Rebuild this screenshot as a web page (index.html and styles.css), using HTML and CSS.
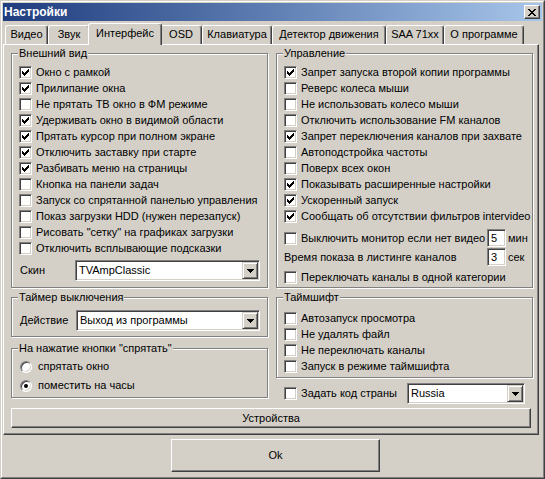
FILE: index.html
```html
<!DOCTYPE html>
<html>
<head>
<meta charset="utf-8">
<link rel="stylesheet" href="styles.css">
</head>
<body>
<div class="window">
  <div class="frame">
    <div class="titlebar">
      <span class="title">Настройки</span>
      <span class="close"><svg width="8" height="7" viewBox="0 0 8 7" shape-rendering="crispEdges"><path d="M0 0h2v1H0zM6 0h2v1H6zM1 1h2v1H1zM5 1h2v1H5zM2 2h4v1H2zM3 3h2v1H3zM2 4h4v1H2zM1 5h2v1H1zM5 5h2v1H5zM0 6h2v1H0zM6 6h2v1H6z" fill="#000"/></svg></span>
    </div>
    <div class="tabs">
      <div class="tab t-video">Видео</div>
      <div class="tab t-sound">Звук</div>
      <div class="tab active t-iface">Интерфейс</div>
      <div class="tab t-osd">OSD</div>
      <div class="tab t-kbd">Клавиатура</div>
      <div class="tab t-motion">Детектор движения</div>
      <div class="tab t-saa">SAA 71xx</div>
      <div class="tab t-about">О программе</div>
    </div>
    <div class="panel">
      <div class="cols">
        <div class="col">
          <div class="group g-view">
            <div class="legend">Внешний вид</div>
            <div class="rows">
              <div class="row"><span class="cb"><svg width="11" height="11" viewBox="0 0 11 11" shape-rendering="crispEdges"><path d="M2 4h1v3H2zM3 5h1v3H3zM4 6h1v3H4zM5 5h1v3H5zM6 4h1v3H6zM7 3h1v3H7zM8 2h1v3H8z" fill="#000"/></svg></span>Окно с рамкой</div>
              <div class="row"><span class="cb"><svg width="11" height="11" viewBox="0 0 11 11" shape-rendering="crispEdges"><path d="M2 4h1v3H2zM3 5h1v3H3zM4 6h1v3H4zM5 5h1v3H5zM6 4h1v3H6zM7 3h1v3H7zM8 2h1v3H8z" fill="#000"/></svg></span>Прилипание окна</div>
              <div class="row"><span class="cb"></span>Не прятать ТВ окно в ФМ режиме</div>
              <div class="row"><span class="cb"><svg width="11" height="11" viewBox="0 0 11 11" shape-rendering="crispEdges"><path d="M2 4h1v3H2zM3 5h1v3H3zM4 6h1v3H4zM5 5h1v3H5zM6 4h1v3H6zM7 3h1v3H7zM8 2h1v3H8z" fill="#000"/></svg></span>Удерживать окно в видимой области</div>
              <div class="row"><span class="cb"><svg width="11" height="11" viewBox="0 0 11 11" shape-rendering="crispEdges"><path d="M2 4h1v3H2zM3 5h1v3H3zM4 6h1v3H4zM5 5h1v3H5zM6 4h1v3H6zM7 3h1v3H7zM8 2h1v3H8z" fill="#000"/></svg></span>Прятать курсор при полном экране</div>
              <div class="row"><span class="cb"><svg width="11" height="11" viewBox="0 0 11 11" shape-rendering="crispEdges"><path d="M2 4h1v3H2zM3 5h1v3H3zM4 6h1v3H4zM5 5h1v3H5zM6 4h1v3H6zM7 3h1v3H7zM8 2h1v3H8z" fill="#000"/></svg></span>Отключить заставку при старте</div>
              <div class="row"><span class="cb"><svg width="11" height="11" viewBox="0 0 11 11" shape-rendering="crispEdges"><path d="M2 4h1v3H2zM3 5h1v3H3zM4 6h1v3H4zM5 5h1v3H5zM6 4h1v3H6zM7 3h1v3H7zM8 2h1v3H8z" fill="#000"/></svg></span>Разбивать меню на страницы</div>
              <div class="row"><span class="cb"></span>Кнопка на панели задач</div>
              <div class="row"><span class="cb"></span>Запуск со спрятанной панелью управления</div>
              <div class="row"><span class="cb"></span>Показ загрузки HDD (нужен перезапуск)</div>
              <div class="row"><span class="cb"></span>Рисовать "сетку" на графиках загрузки</div>
              <div class="row"><span class="cb"></span>Отключить всплывающие подсказки</div>
            </div>
            <div class="field-row skin-row">
              <span class="flabel skin-label">Скин</span>
              <div class="combo skin-combo"><span class="ctext">TVAmpClassic</span><span class="cbtn"><svg width="7" height="4" viewBox="0 0 7 4" shape-rendering="crispEdges"><path d="M0 0h7v1H0zM1 1h5v1H1zM2 2h3v1H2zM3 3h1v1H3z" fill="#000"/></svg></span></div>
            </div>
          </div>
          <div class="group g-timer">
            <div class="legend">Таймер выключения</div>
            <div class="field-row timer-row">
              <span class="flabel act-label">Действие</span>
              <div class="combo act-combo"><span class="ctext">Выход из программы</span><span class="cbtn"><svg width="7" height="4" viewBox="0 0 7 4" shape-rendering="crispEdges"><path d="M0 0h7v1H0zM1 1h5v1H1zM2 2h3v1H2zM3 3h1v1H3z" fill="#000"/></svg></span></div>
            </div>
          </div>
          <div class="group g-hide">
            <div class="legend">На нажатие кнопки "спрятать"</div>
            <div class="radios">
              <div class="rrow"><span class="radio"></span>спрятать окно</div>
              <div class="rrow"><span class="radio"><span class="dot"></span></span>поместить на часы</div>
            </div>
          </div>
        </div>
        <div class="col">
          <div class="group g-control">
            <div class="legend">Управление</div>
            <div class="rows">
              <div class="row"><span class="cb"><svg width="11" height="11" viewBox="0 0 11 11" shape-rendering="crispEdges"><path d="M2 4h1v3H2zM3 5h1v3H3zM4 6h1v3H4zM5 5h1v3H5zM6 4h1v3H6zM7 3h1v3H7zM8 2h1v3H8z" fill="#000"/></svg></span>Запрет запуска второй копии программы</div>
              <div class="row"><span class="cb"></span>Реверс колеса мыши</div>
              <div class="row"><span class="cb"></span>Не использовать колесо мыши</div>
              <div class="row"><span class="cb"></span>Отключить использование FM каналов</div>
              <div class="row"><span class="cb"><svg width="11" height="11" viewBox="0 0 11 11" shape-rendering="crispEdges"><path d="M2 4h1v3H2zM3 5h1v3H3zM4 6h1v3H4zM5 5h1v3H5zM6 4h1v3H6zM7 3h1v3H7zM8 2h1v3H8z" fill="#000"/></svg></span>Запрет переключения каналов при захвате</div>
              <div class="row"><span class="cb"></span>Автоподстройка частоты</div>
              <div class="row"><span class="cb"></span>Поверх всех окон</div>
              <div class="row"><span class="cb"><svg width="11" height="11" viewBox="0 0 11 11" shape-rendering="crispEdges"><path d="M2 4h1v3H2zM3 5h1v3H3zM4 6h1v3H4zM5 5h1v3H5zM6 4h1v3H6zM7 3h1v3H7zM8 2h1v3H8z" fill="#000"/></svg></span>Показывать расширенные настройки</div>
              <div class="row"><span class="cb"><svg width="11" height="11" viewBox="0 0 11 11" shape-rendering="crispEdges"><path d="M2 4h1v3H2zM3 5h1v3H3zM4 6h1v3H4zM5 5h1v3H5zM6 4h1v3H6zM7 3h1v3H7zM8 2h1v3H8z" fill="#000"/></svg></span>Ускоренный запуск</div>
              <div class="row"><span class="cb"><svg width="11" height="11" viewBox="0 0 11 11" shape-rendering="crispEdges"><path d="M2 4h1v3H2zM3 5h1v3H3zM4 6h1v3H4zM5 5h1v3H5zM6 4h1v3H6zM7 3h1v3H7zM8 2h1v3H8z" fill="#000"/></svg></span>Сообщать об отсутствии фильтров intervideo</div>
            </div>
            <div class="erow erow-first">
              <div class="ecell"><span class="cb"></span>Выключить монитор если нет видео</div>
              <div class="edit">5</div>
              <span class="unit">мин</span>
            </div>
            <div class="erow erow-second">
              <div class="ecell">Время показа в листинге каналов</div>
              <div class="edit">3</div>
              <span class="unit">сек</span>
            </div>
            <div class="row last-row"><span class="cb"></span>Переключать каналы в одной категории</div>
          </div>
          <div class="group g-shift">
            <div class="legend">Таймшифт</div>
            <div class="rows shift-rows">
              <div class="row"><span class="cb"></span>Автозапуск просмотра</div>
              <div class="row"><span class="cb"></span>Не удалять файл</div>
              <div class="row"><span class="cb"></span>Не переключать каналы</div>
              <div class="row"><span class="cb"></span>Запуск в режиме таймшифта</div>
            </div>
          </div>
          <div class="country-row">
            <div class="ccell"><span class="cb"></span>Задать код страны</div>
            <div class="combo country-combo"><span class="ctext">Russia</span><span class="cbtn"><svg width="7" height="4" viewBox="0 0 7 4" shape-rendering="crispEdges"><path d="M0 0h7v1H0zM1 1h5v1H1zM2 2h3v1H2zM3 3h1v1H3z" fill="#000"/></svg></span></div>
          </div>
        </div>
      </div>
      <div class="btn devices">Устройства</div>
    </div>
    <div class="btn ok">Ok</div>
  </div>
</div>
</body>
</html>
```

FILE: styles.css
```css
* { box-sizing: border-box; }
html, body { margin: 0; padding: 0; }
body {
  background: #d4d0c8;
  font-family: "Liberation Sans", Arial, sans-serif;
  font-size: 11px;
  line-height: 13px;
  color: #000;
}
.window {
  width: 545px;
  height: 479px;
  border: 1px solid;
  border-color: #d4d0c8 #404040 #404040 #d4d0c8;
  background: #d4d0c8;
}
.frame {
  height: 100%;
  border: 1px solid;
  border-color: #fff #808080 #808080 #fff;
  padding: 1px;
  display: flex;
  flex-direction: column;
  align-items: flex-start;
}
.titlebar {
  width: 100%;
  height: 18px;
  flex: 0 0 18px;
  display: flex;
  align-items: center;
  padding: 0 2px 0 1px;
  background: linear-gradient(to right, #1f3c7e 0%, #5878ae 45%, #a8c6ea 100%);
}
.title {
  color: #fff;
  font-weight: bold;
  font-size: 12px;
  line-height: 14px;
}
.close {
  margin-left: auto;
  width: 16px;
  height: 14px;
  background: #d4d0c8;
  border: 1px solid;
  border-color: #fff #404040 #404040 #fff;
  box-shadow: inset -1px -1px 0 #808080;
  display: flex;
  align-items: center;
  justify-content: center;
  padding-right: 1px;
}
.close svg { display: block; }

.tabs {
  height: 23px;
  flex: 0 0 23px;
  display: flex;
  align-items: flex-end;
  padding-left: 2px;
}
.tab {
  height: 19px;
  border-top: 1px solid #fff;
  border-left: 1px solid #fff;
  border-right: 1px solid #404040;
  box-shadow: inset -1px 0 0 #808080;
  border-radius: 3px 3px 0 0;
  background: #d4d0c8;
  display: flex;
  align-items: center;
  justify-content: center;
  white-space: nowrap;
  padding-bottom: 1px;
}
.tab.active {
  height: 22px;
  margin: 0 -2px -1px;
  position: relative;
  z-index: 2;
  padding-bottom: 3px;
}
.t-video { width: 43px; }
.t-sound { width: 42px; }
.t-iface { width: 74px; }
.t-osd { width: 42px; }
.t-kbd { width: 70px; }
.t-motion { width: 114px; }
.t-saa { width: 58px; }
.t-about { width: 80px; }

.panel {
  width: 536px;
  border: 1px solid;
  border-color: #fff #404040 #404040 #fff;
  box-shadow: inset -1px -1px 0 #808080;
  padding: 8px 5px 6px 7px;
}
.cols {
  display: grid;
  grid-template-columns: 257px 257px;
  column-gap: 8px;
  align-items: start;
}
.col {
  display: flex;
  flex-direction: column;
  align-items: stretch;
}
.group {
  border: 1px solid #808080;
  box-shadow: inset 1px 1px 0 #fff, 1px 1px 0 #fff;
  display: flex;
  flex-direction: column;
  align-items: stretch;
  padding-left: 7px;
}
.legend {
  align-self: flex-start;
  height: 13px;
  line-height: 13px;
  margin: -7px 0 0 -1px;
  padding: 0 1px;
  background: #d4d0c8;
  white-space: nowrap;
}
.g-view { height: 235px; }
.g-timer { height: 40px; margin-top: 9px; }
.g-hide { height: 50px; margin-top: 11px; }
.g-control { height: 235px; }
.g-shift { height: 81px; margin-top: 9px; }

.rows { margin-top: 4px; display: flex; flex-direction: column; }
.shift-rows { margin-top: 6px; }
.row {
  height: 16px;
  display: flex;
  align-items: center;
  white-space: nowrap;
}
.cb {
  flex: 0 0 13px;
  width: 13px;
  height: 13px;
  margin-right: 4px;
  background: #fff;
  border: 1px solid;
  border-color: #808080 #fff #fff #808080;
  box-shadow: inset 1px 1px 0 #404040, inset -1px -1px 0 #d4d0c8;
}
.cb svg { display: block; }

.field-row {
  display: flex;
  align-items: center;
}
.skin-row { margin-top: 4px; }
.timer-row { margin-top: 6px; }
.flabel { padding-left: 1px; white-space: nowrap; }
.skin-label { width: 56px; }
.act-label { width: 57px; }
.combo {
  height: 21px;
  background: #fff;
  border: 1px solid;
  border-color: #808080 #fff #fff #808080;
  box-shadow: inset 1px 1px 0 #404040, inset -1px -1px 0 #d4d0c8;
  padding: 1px;
  display: flex;
  align-items: stretch;
}
.ctext {
  flex: 1;
  display: flex;
  align-items: center;
  padding-left: 2px;
  white-space: nowrap;
}
.cbtn {
  width: 16px;
  flex: 0 0 16px;
  background: #d4d0c8;
  border: 1px solid;
  border-color: #d4d0c8 #404040 #404040 #d4d0c8;
  box-shadow: inset 1px 1px 0 #fff, inset -1px -1px 0 #808080;
  display: flex;
  align-items: center;
  justify-content: center;
}
.cbtn svg { display: block; }
.skin-combo { width: 185px; }
.act-combo { width: 184px; }

.radios { margin-top: 2px; padding-left: 1px; }
.rrow {
  height: 19px;
  display: flex;
  align-items: center;
  white-space: nowrap;
}
.radio {
  flex: 0 0 12px;
  width: 12px;
  height: 12px;
  margin-right: 6px;
  border-radius: 50%;
  background: #fff;
  border: 1px solid;
  border-color: #808080 #fff #fff #808080;
  box-shadow: inset 1px 1px 0 #404040, inset -1px -1px 0 #d4d0c8;
  display: flex;
  align-items: center;
  justify-content: center;
}
.dot {
  width: 4px;
  height: 4px;
  border-radius: 50%;
  background: #000;
}

.erow {
  height: 18px;
  display: grid;
  grid-template-columns: 203px 19px auto;
  align-items: center;
}
.erow-first { margin-top: 5px; }
.erow-second { margin-top: 1px; }
.ecell {
  display: flex;
  align-items: center;
  white-space: nowrap;
}
.edit {
  width: 19px;
  height: 18px;
  background: #fff;
  border: 1px solid;
  border-color: #808080 #fff #fff #808080;
  box-shadow: inset 1px 1px 0 #404040, inset -1px -1px 0 #d4d0c8;
  padding-left: 3px;
  display: flex;
  align-items: center;
}
.unit { margin-left: 2px; white-space: nowrap; }
.last-row { margin-top: 3px; }

.country-row {
  margin-top: 5px;
  height: 21px;
  display: grid;
  grid-template-columns: 123px 118px;
  padding-left: 8px;
  align-items: center;
}
.ccell {
  display: flex;
  align-items: center;
  white-space: nowrap;
}
.country-combo { width: 118px; }

.btn {
  background: #d4d0c8;
  border: 1px solid;
  border-color: #fff #404040 #404040 #fff;
  box-shadow: inset -1px -1px 0 #808080;
  display: flex;
  align-items: center;
  justify-content: center;
}
.devices {
  width: 520px;
  height: 20px;
  margin-top: 4px;
}
.ok {
  width: 209px;
  height: 33px;
  margin: 4px 0 0 168px;
}
```
